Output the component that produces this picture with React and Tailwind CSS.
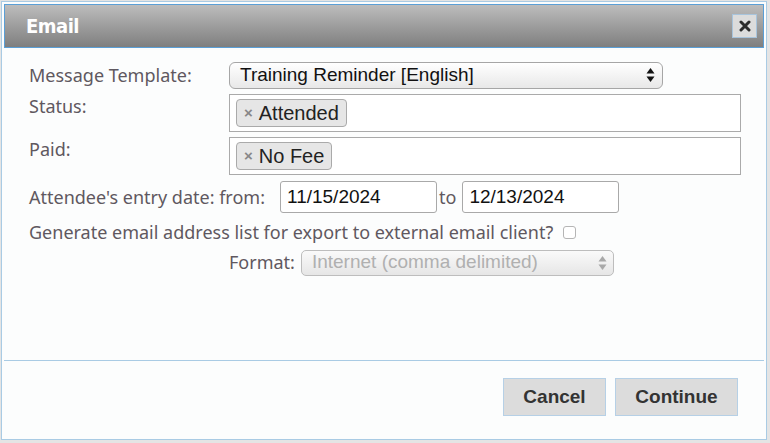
import React from "react";

const label = "text-[#5f5860] text-[18px]";

function Tag({ children }) {
  return (
    <span className="inline-flex items-center h-[28px] pl-[7px] pr-[7px] border border-[#aaaaaa] rounded-[4px] bg-[#e6e6e6] text-[20px] text-[#222]">
      <span className="text-[#888] text-[15px] font-bold mr-[6px]">×</span>
      {children}
    </span>
  );
}

function Arrows({ color = "#111" }) {
  return (
    <svg width="9" height="16" viewBox="0 0 9 16">
      <path d="M4.5 1 L8.5 6.5 L0.5 6.5 Z" fill={color} />
      <path d="M4.5 15 L8.5 9.5 L0.5 9.5 Z" fill={color} />
    </svg>
  );
}

export default function App() {
  return (
    <div
      className="w-[770px] h-[443px] bg-[#e4e4e4] pt-px pl-px overflow-hidden"
      style={{ fontFamily: '"Noto Sans", "Liberation Sans", sans-serif' }}
    >
      <div className="w-[766px] h-[439px] border border-[#a9cbe4] bg-[#fcfdfd] p-[2px] flex flex-col">
        {/* title bar */}
        <div className="h-[44px] border border-[#5b9fd6] bg-gradient-to-b from-[#bdbdbd] to-[#7f7f7f] flex items-center justify-between pl-[21px] pr-[6px]">
          <span
            className="text-white font-bold text-[20px] tracking-tight"
            style={{ fontFamily: '"DejaVu Sans Condensed", "DejaVu Sans", sans-serif' }}
          >
            Email
          </span>
          <button className="w-[25px] h-[24px] border border-[#a8c4dc] bg-[#dcdcdc] flex items-center justify-center">
            <svg width="12" height="12" viewBox="0 0 12 12">
              <path d="M2 2 L10 10 M10 2 L2 10" stroke="#2a2a2a" strokeWidth="3" strokeLinecap="round" />
            </svg>
          </button>
        </div>

        {/* form */}
        <div className="pl-[25px] pr-[23px] pt-[13px] flex-1">
          <div className="flex items-center h-[28px]">
            <span className={`${label} w-[200px]`}>Message Template:</span>
            <div
              className="w-[434px] h-[27px] border border-[#a6a6a6] rounded-[6px] bg-gradient-to-b from-white to-[#e8e8e8] flex items-center justify-between pl-[10px] pr-[7px] text-[19px] text-[#111]"
              style={{ fontFamily: '"Liberation Sans", sans-serif' }}
            >
              Training Reminder [English]
              <Arrows />
            </div>
          </div>

          <div className="flex mt-[5px]">
            <span className={`${label} w-[200px] -mt-[1px]`}>Status:</span>
            <div
              className="flex-1 h-[38px] border border-[#aaaaaa] bg-white flex items-center pl-[6px]"
              style={{ fontFamily: '"Liberation Sans", sans-serif' }}
            >
              <Tag>Attended</Tag>
            </div>
          </div>

          <div className="flex mt-[5px]">
            <span className={`${label} w-[200px] -mt-[1px]`}>Paid:</span>
            <div
              className="flex-1 h-[38px] border border-[#aaaaaa] bg-white flex items-center pl-[6px]"
              style={{ fontFamily: '"Liberation Sans", sans-serif' }}
            >
              <Tag>No Fee</Tag>
            </div>
          </div>

          <div className="flex items-center mt-[6px] h-[32px]">
            <span className={`${label} mr-[15px]`}>Attendee's entry date: from:</span>
            <div
              className="w-[157px] h-[32px] border border-[#a9a9a9] rounded-[3px] bg-white flex items-center pl-[6px] text-[19px] text-[#111]"
              style={{ fontFamily: '"Liberation Sans", sans-serif' }}
            >
              11/15/2024
            </div>
            <span className={`${label} ml-[2px] mr-[6px]`}>to</span>
            <div
              className="w-[157px] h-[32px] border border-[#a9a9a9] rounded-[3px] bg-white flex items-center pl-[6px] text-[19px] text-[#111]"
              style={{ fontFamily: '"Liberation Sans", sans-serif' }}
            >
              12/13/2024
            </div>
          </div>

          <div className="flex items-center mt-[5px] h-[28px]">
            <span className={label}>Generate email address list for export to external email client?</span>
            <span className="ml-[10px] w-[13px] h-[13px] border border-[#b5b5b5] rounded-[3px] bg-white" />
          </div>

          <div className="flex items-center mt-[3px] h-[27px] pl-[200px]">
            <span className={`${label} mr-[6px]`}>Format:</span>
            <div
              className="w-[313px] h-[26px] border border-[#bdbdbd] rounded-[5px] bg-gradient-to-b from-[#fafafa] to-[#e6e6e6] flex items-center justify-between pl-[10px] pr-[6px] text-[19px] text-[#b0b0b0]"
              style={{ fontFamily: '"Liberation Sans", sans-serif' }}
            >
              Internet (comma delimited)
              <Arrows color="#a8a8a8" />
            </div>
          </div>
        </div>

        {/* footer */}
        <div className="border-t border-[#a9cbe4] h-[77px] flex items-start justify-end pt-[17px] pr-[26px] gap-[9px]">
          <button
            className="w-[103px] h-[38px] border border-[#b6d0e6] bg-[#dcdcdc] text-[#333] font-bold text-[19px]"
            style={{ fontFamily: '"Liberation Sans", sans-serif' }}
          >
            Cancel
          </button>
          <button
            className="w-[123px] h-[38px] border border-[#b6d0e6] bg-[#dcdcdc] text-[#333] font-bold text-[19px]"
            style={{ fontFamily: '"Liberation Sans", sans-serif' }}
          >
            Continue
          </button>
        </div>
      </div>
    </div>
  );
}
